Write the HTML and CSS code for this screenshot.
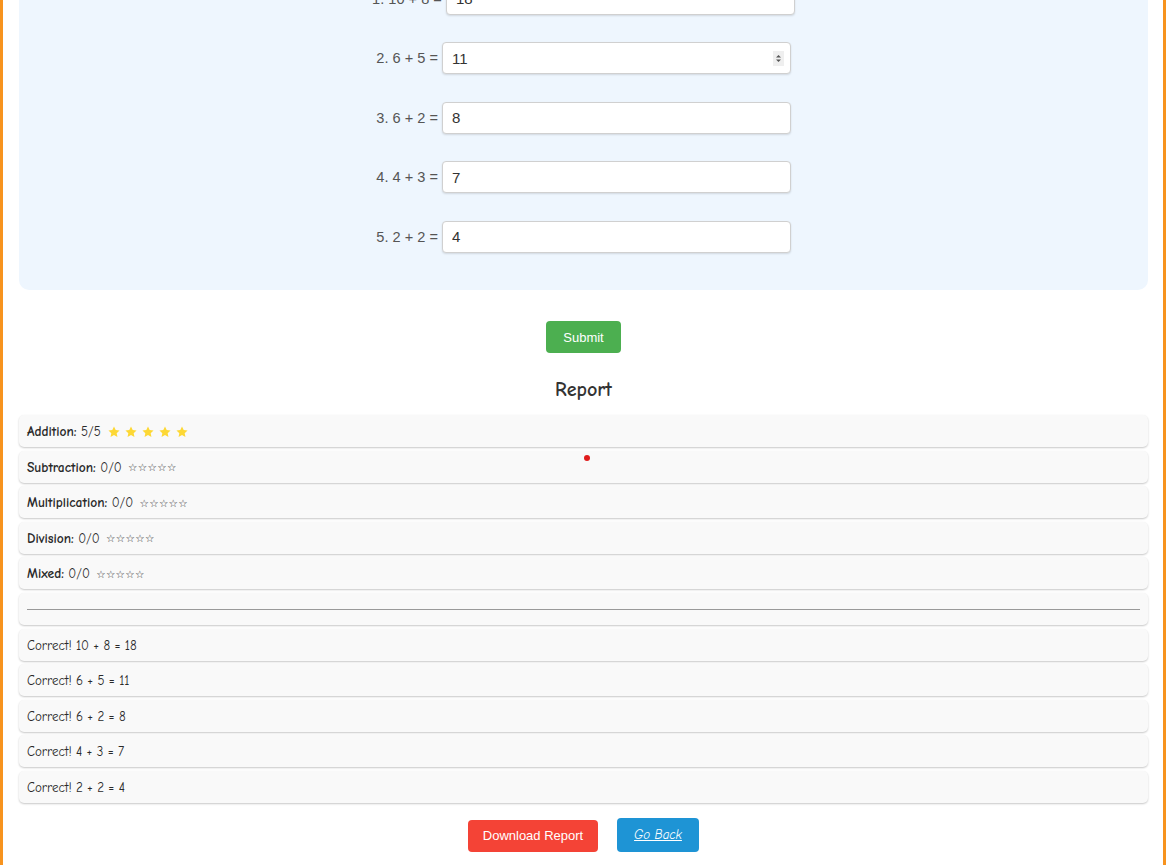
FILE: index.html
```html
<!DOCTYPE html>
<html lang="en">
<head>
<meta charset="utf-8">
<title>Math Practice</title>
<link rel="stylesheet" href="styles.css">
</head>
<body>
<div class="page">
  <section class="quiz">
    <div class="q-row"><label class="q-label">1. 10 + 8 =</label><div class="q-field"><input class="q-input" type="text" value="18"></div></div>
    <div class="q-row"><label class="q-label">2. 6 + 5 =</label><div class="q-field"><input class="q-input" type="text" value="11"><span class="spin"><svg width="7" height="9" viewBox="0 0 7 9"><path d="M3.5 1 L6 3.6 H1 Z" fill="#555"/><path d="M3.5 8 L6 5.4 H1 Z" fill="#555"/></svg></span></div></div>
    <div class="q-row"><label class="q-label">3. 6 + 2 =</label><div class="q-field"><input class="q-input" type="text" value="8"></div></div>
    <div class="q-row"><label class="q-label">4. 4 + 3 =</label><div class="q-field"><input class="q-input" type="text" value="7"></div></div>
    <div class="q-row"><label class="q-label">5. 2 + 2 =</label><div class="q-field"><input class="q-input" type="text" value="4"></div></div>
  </section>

  <div class="submit-wrap"><button class="btn btn-submit">Submit</button></div>

  <h2 class="report-title">Report</h2>

  <div class="report">
    <div class="r-row"><b>Addition:</b>&nbsp;5/5 <span class="stars-full">
      <svg viewBox="0 0 24 24" class="star"><path d="M12 2.5l2.9 6.1 6.6.8-4.9 4.6 1.3 6.6L12 17.3l-5.9 3.3 1.3-6.6-4.9-4.6 6.6-.8z"/></svg><svg viewBox="0 0 24 24" class="star"><path d="M12 2.5l2.9 6.1 6.6.8-4.9 4.6 1.3 6.6L12 17.3l-5.9 3.3 1.3-6.6-4.9-4.6 6.6-.8z"/></svg><svg viewBox="0 0 24 24" class="star"><path d="M12 2.5l2.9 6.1 6.6.8-4.9 4.6 1.3 6.6L12 17.3l-5.9 3.3 1.3-6.6-4.9-4.6 6.6-.8z"/></svg><svg viewBox="0 0 24 24" class="star"><path d="M12 2.5l2.9 6.1 6.6.8-4.9 4.6 1.3 6.6L12 17.3l-5.9 3.3 1.3-6.6-4.9-4.6 6.6-.8z"/></svg><svg viewBox="0 0 24 24" class="star"><path d="M12 2.5l2.9 6.1 6.6.8-4.9 4.6 1.3 6.6L12 17.3l-5.9 3.3 1.3-6.6-4.9-4.6 6.6-.8z"/></svg>
    </span></div>
    <div class="r-row"><b>Subtraction:</b>&nbsp;0/0 <span class="stars-empty">☆☆☆☆☆</span></div>
    <div class="r-row"><b>Multiplication:</b>&nbsp;0/0 <span class="stars-empty">☆☆☆☆☆</span></div>
    <div class="r-row"><b>Division:</b>&nbsp;0/0 <span class="stars-empty">☆☆☆☆☆</span></div>
    <div class="r-row"><b>Mixed:</b>&nbsp;0/0 <span class="stars-empty">☆☆☆☆☆</span></div>
    <div class="r-row r-sep"><hr class="sep"></div>
    <div class="r-row">Correct! 10 + 8 = 18</div>
    <div class="r-row">Correct! 6 + 5 = 11</div>
    <div class="r-row">Correct! 6 + 2 = 8</div>
    <div class="r-row">Correct! 4 + 3 = 7</div>
    <div class="r-row">Correct! 2 + 2 = 4</div>
    <span class="dot"></span>
  </div>

  <div class="actions">
    <button class="btn btn-download">Download Report</button>
    <a class="btn btn-back" href="#">Go Back</a>
  </div>
</div>
</body>
</html>
```

FILE: styles.css
```css
html, body {
  margin: 0;
  padding: 0;
  background: #fff;
  overflow: hidden;
}

.page {
  border-left: 3px solid #f7931e;
  border-right: 3px solid #f7931e;
  padding: 0 15px 40px 16px;
  box-sizing: border-box;
  width: 1166px;
  font-family: "Comic Sans MS", "Comic Neue", "Open Sans", sans-serif;
  color: #333;
  position: relative;
}

.quiz {
  background: #eef6fe;
  border-radius: 0 0 10px 10px;
  margin-top: -37.5px;
  padding: 20px 0 37.5px;
  display: flex;
  flex-direction: column;
  align-items: center;
  gap: 27.5px;
}

.q-row {
  display: flex;
  align-items: center;
  gap: 4px;
}

.q-label {
  font-family: "Liberation Sans", Arial, sans-serif;
  font-size: 14.6px;
  color: #555;
  text-align: right;
  min-width: 62px;
}

.q-field {
  position: relative;
}

.q-input {
  display: block;
  width: 349px;
  height: 32px;
  box-sizing: border-box;
  border: 1px solid #d0d0d0;
  border-radius: 4px;
  box-shadow: 0 1px 2px rgba(0,0,0,0.12);
  padding: 0 9px;
  font-family: "Liberation Sans", Arial, sans-serif;
  font-size: 15px;
  color: #333;
  background: #fff;
  outline: none;
}

.spin {
  position: absolute;
  right: 7px;
  top: 9px;
  width: 11px;
  height: 15px;
  background: #efefef;
  display: flex;
  align-items: center;
  justify-content: center;
}

.submit-wrap {
  display: flex;
  justify-content: center;
  margin-top: 31px;
}

.btn {
  font-family: "Liberation Sans", Arial, sans-serif;
  font-size: 13px;
  color: #fff;
  border: none;
  border-radius: 4px;
  height: 32px;
  box-sizing: border-box;
  display: inline-flex;
  align-items: center;
  justify-content: center;
  cursor: pointer;
}

.btn-submit {
  background: #4caf50;
  width: 75px;
}

.report-title {
  text-align: center;
  font-size: 20px;
  line-height: 24px;
  font-weight: bold;
  color: #333;
  margin: 25px 0 13px;
}

.report {
  display: flex;
  flex-direction: column;
  gap: 3.6px;
  position: relative;
}

.r-row {
  height: 32px;
  box-sizing: border-box;
  background: #f9f9f9;
  border-radius: 5px;
  box-shadow: 0 1px 2px rgba(0,0,0,0.22);
  padding: 1px 8px 0;
  display: flex;
  align-items: center;
  font-size: 13px;
  color: #2a2a2a;
  white-space: pre;
}

.r-row b {
  font-weight: bold;
  font-size: 13.5px;
}

.stars-full {
  display: inline-flex;
  gap: 3px;
  margin-left: 2px;
}

.star {
  width: 14px;
  height: 14px;
  fill: #fdd835;
}

.stars-empty {
  font-family: "DejaVu Sans", sans-serif;
  font-size: 10.5px;
  letter-spacing: 0.3px;
  color: #333;
  margin-left: 2px;
}

.sep {
  flex: 1;
  margin: 0;
  border: none;
  border-top: 1px solid #999;
}

.dot {
  position: absolute;
  left: 565px;
  top: 40px;
  width: 6px;
  height: 6px;
  border-radius: 50%;
  background: #e01b1b;
}

.actions {
  display: flex;
  justify-content: center;
  align-items: flex-end;
  gap: 19px;
  margin-top: 15px;
}

.btn-download {
  background: #f44336;
  width: 130px;
}

.btn-back {
  background: #1e94d5;
  width: 82px;
  height: 34px;
  font-family: "Comic Sans MS", "Comic Neue", "Open Sans", sans-serif;
  font-style: italic;
  text-decoration: underline;
  font-size: 13px;
}
```
